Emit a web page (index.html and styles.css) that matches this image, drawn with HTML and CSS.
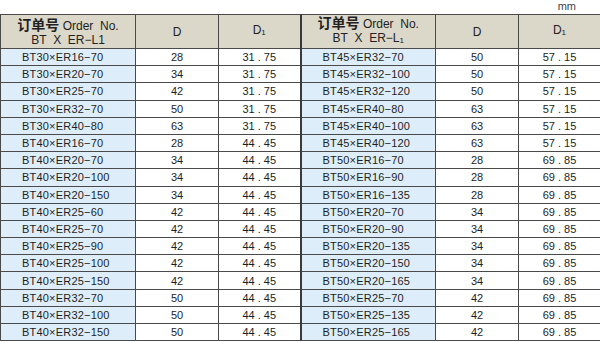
FILE: index.html
```html
<!DOCTYPE html>
<html>
<head>
<meta charset="utf-8">
<link rel="stylesheet" href="styles.css">
</head>
<body>
<div class="page">
  <div class="unit">mm</div>
  <table class="spec">
    <colgroup>
      <col class="c-code"><col class="c-d"><col class="c-d1">
      <col class="c-code"><col class="c-d"><col class="c-d1">
    </colgroup>
    <thead>
      <tr>
        <th class="h-code"><span class="cn">订单号</span> Order&nbsp; No.<br>BT&nbsp; X&nbsp; ER−L1</th>
        <th>D</th>
        <th class="split">D<sub>1</sub></th>
        <th class="h-code"><span class="cn">订单号</span> Order&nbsp; No.<br>BT&nbsp; X&nbsp; ER−L<sub>1</sub></th>
        <th>D</th>
        <th>D<sub>1</sub></th>
      </tr>
    </thead>
    <tbody>
      <tr><td class="code">BT30×ER16−70</td><td>28</td><td class="split">31 . 75</td><td class="code">BT45×ER32−70</td><td>50</td><td>57 . 15</td></tr>
      <tr><td class="code">BT30×ER20−70</td><td>34</td><td class="split">31 . 75</td><td class="code">BT45×ER32−100</td><td>50</td><td>57 . 15</td></tr>
      <tr><td class="code">BT30×ER25−70</td><td>42</td><td class="split">31 . 75</td><td class="code">BT45×ER32−120</td><td>50</td><td>57 . 15</td></tr>
      <tr><td class="code">BT30×ER32−70</td><td>50</td><td class="split">31 . 75</td><td class="code">BT45×ER40−80</td><td>63</td><td>57 . 15</td></tr>
      <tr><td class="code">BT30×ER40−80</td><td>63</td><td class="split">31 . 75</td><td class="code">BT45×ER40−100</td><td>63</td><td>57 . 15</td></tr>
      <tr><td class="code">BT40×ER16−70</td><td>28</td><td class="split">44 . 45</td><td class="code">BT45×ER40−120</td><td>63</td><td>57 . 15</td></tr>
      <tr><td class="code">BT40×ER20−70</td><td>34</td><td class="split">44 . 45</td><td class="code">BT50×ER16−70</td><td>28</td><td>69 . 85</td></tr>
      <tr><td class="code">BT40×ER20−100</td><td>34</td><td class="split">44 . 45</td><td class="code">BT50×ER16−90</td><td>28</td><td>69 . 85</td></tr>
      <tr><td class="code">BT40×ER20−150</td><td>34</td><td class="split">44 . 45</td><td class="code">BT50×ER16−135</td><td>28</td><td>69 . 85</td></tr>
      <tr><td class="code">BT40×ER25−60</td><td>42</td><td class="split">44 . 45</td><td class="code">BT50×ER20−70</td><td>34</td><td>69 . 85</td></tr>
      <tr><td class="code">BT40×ER25−70</td><td>42</td><td class="split">44 . 45</td><td class="code">BT50×ER20−90</td><td>34</td><td>69 . 85</td></tr>
      <tr><td class="code">BT40×ER25−90</td><td>42</td><td class="split">44 . 45</td><td class="code">BT50×ER20−135</td><td>34</td><td>69 . 85</td></tr>
      <tr><td class="code">BT40×ER25−100</td><td>42</td><td class="split">44 . 45</td><td class="code">BT50×ER20−150</td><td>34</td><td>69 . 85</td></tr>
      <tr><td class="code">BT40×ER25−150</td><td>42</td><td class="split">44 . 45</td><td class="code">BT50×ER20−165</td><td>34</td><td>69 . 85</td></tr>
      <tr><td class="code">BT40×ER32−70</td><td>50</td><td class="split">44 . 45</td><td class="code">BT50×ER25−70</td><td>42</td><td>69 . 85</td></tr>
      <tr><td class="code">BT40×ER32−100</td><td>50</td><td class="split">44 . 45</td><td class="code">BT50×ER25−135</td><td>42</td><td>69 . 85</td></tr>
      <tr><td class="code">BT40×ER32−150</td><td>50</td><td class="split">44 . 45</td><td class="code">BT50×ER25−165</td><td>42</td><td>69 . 85</td></tr>
    </tbody>
  </table>
</div>
</body>
</html>
```
FILE: styles.css
```css
html, body {
  margin: 0;
  padding: 0;
  background: #ffffff;
}
.page {
  width: 600px;
  height: 342px;
  overflow: hidden;
  font-family: "Liberation Sans", "DejaVu Sans", "Noto Sans CJK SC", sans-serif;
  color: #1e1e24;
}
.unit {
  height: 14px;
  line-height: 12px;
  font-size: 11px;
  color: #444;
  text-align: right;
  padding-right: 24px;
  box-sizing: border-box;
}
.spec {
  width: 600px;
  border-collapse: collapse;
  table-layout: fixed;
}
.c-code { width: 135px; }
.c-d { width: 83px; }
.c-d1 { width: 82px; }
.spec th, .spec td {
  border: 1px solid #4a4a4a;
  padding: 0;
  font-weight: normal;
  text-align: center;
  white-space: nowrap;
}
.spec th {
  height: 33px;
  background: #dcd8c9;
  font-size: 12px;
  line-height: 14px;
  color: #222;
}
.spec th sub {
  font-size: 8px;
  vertical-align: -1px;
}
.spec .cn {
  font-family: "Noto Sans CJK SC", sans-serif;
  font-size: 14px;
  font-weight: bold;
}
.spec td {
  height: 16.2px;
  font-size: 11px;
  line-height: 14px;
}
.spec td.code {
  text-align: left;
  padding-left: 21px;
  letter-spacing: 0.2px;
  background: #ddeefa;
}
.spec .split {
  border-right: 2px solid #3a3a3a;
}
```
